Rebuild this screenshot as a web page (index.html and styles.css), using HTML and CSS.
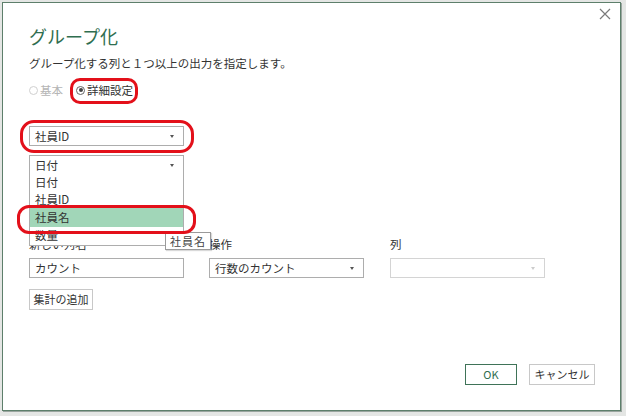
FILE: index.html
```html
<!DOCTYPE html>
<html lang="ja">
<head>
<meta charset="utf-8">
<link rel="stylesheet" href="styles.css">
</head>
<body>
<div class="dialog">
  <div class="close">
    <svg width="12" height="12" viewBox="0 0 12 12"><path d="M1 1L11 11M11 1L1 11" stroke="#7a7a7a" stroke-width="1.2" fill="none"/></svg>
  </div>
  <h1 class="title">グループ化</h1>
  <p class="subtitle">グループ化する列と１つ以上の出力を指定します。</p>
  <div class="radios">
    <label class="radio disabled"><span class="dot"></span>基本</label>
    <label class="radio"><span class="dot checked"></span>詳細設定</label>
  </div>
  <div class="select first"><span>社員ID</span><span class="arrow"></span></div>
  <div class="select second"><span>日付</span><span class="arrow"></span></div>
  <div class="spacer"></div>
  <div class="grid labels">
    <div>新しい列名</div>
    <div>操作</div>
    <div>列</div>
  </div>
  <div class="grid fields">
    <div class="input">カウント</div>
    <div class="select"><span>行数のカウント</span><span class="arrow"></span></div>
    <div class="select disabled"><span></span><span class="arrow"></span></div>
  </div>
  <button class="btn add">集計の追加</button>
  <div class="footer">
    <button class="btn ok">OK</button>
    <button class="btn cancel">キャンセル</button>
  </div>

  <ul class="list">
    <li>日付</li>
    <li>社員ID</li>
    <li class="hl">社員名</li>
    <li>数量</li>
  </ul>
  <div class="tooltip">社員名</div>

  <div class="mark m1"></div>
  <div class="mark m2"></div>
  <div class="mark m3"></div>
</div>
</body>
</html>
```
FILE: styles.css
```css
* { box-sizing: border-box; }
html, body { margin: 0; padding: 0; }
body {
  width: 626px;
  height: 416px;
  background: #e4e6e4;
  font-family: "Noto Sans CJK JP", "Noto Sans", sans-serif;
  color: #333;
  padding: 2px 0 0 2px;
}
.dialog {
  position: relative;
  width: 619px;
  height: 409px;
  background: #fff;
  border: 1px solid #5d7f6b;
  box-shadow: 1px 1px 0 #9aa59f;
  padding: 21px 0 0 26px;
  display: flex;
  flex-direction: column;
  align-items: flex-start;
}
.close {
  position: absolute;
  right: 9px;
  top: 5px;
  width: 12px;
  height: 12px;
  line-height: 0;
}
.title {
  margin: 0;
  font-size: 18px;
  font-weight: normal;
  line-height: 24px;
  color: #2f6e50;
}
.subtitle {
  margin: 6px 0 0;
  font-size: 11.5px;
  line-height: 18px;
  color: #333;
}
.radios {
  margin-top: 9px;
  display: flex;
  gap: 13px;
  font-size: 11.5px;
  line-height: 18px;
}
.radio {
  display: flex;
  align-items: center;
  gap: 2px;
}
.radio.disabled { color: #b5b5b5; }
.dot {
  width: 9px;
  height: 9px;
  border: 1px solid #b0b0b0;
  border-radius: 50%;
  position: relative;
}
.radio.disabled .dot { border-color: #d0d0d0; }
.dot.checked { border-color: #666; }
.dot.checked::after {
  content: "";
  position: absolute;
  left: 1.5px;
  top: 1.5px;
  width: 4px;
  height: 4px;
  border-radius: 50%;
  background: #444;
}
.select, .input {
  width: 155px;
  height: 20px;
  border: 1px solid #adadad;
  background: #fff;
  font-size: 11.5px;
  line-height: 18px;
  padding: 0 6px 0 5px;
  display: flex;
  align-items: center;
  justify-content: space-between;
  color: #333;
}
.arrow {
  width: 0;
  height: 0;
  border-left: 2.5px solid transparent;
  border-right: 2.5px solid transparent;
  border-top: 3px solid #555;
  margin-right: 3px;
}
.select.disabled { border-color: #d4d4d4; }
.select.disabled .arrow { border-top-color: #ccc; }
.select.first { margin-top: 27px; }
.select.second { margin-top: 9px; }
.spacer { height: 61px; }
.grid {
  display: grid;
  grid-template-columns: 155px 155px 155px;
  column-gap: 25px;
  font-size: 11.5px;
}
.labels { line-height: 16px; }
.labels div:nth-child(3) { padding-left: 1px; }
.fields { margin-top: 6px; }
.fields .select:nth-child(3) { margin-left: 1px; }
.btn {
  font-family: inherit;
  font-size: 11px;
  line-height: 17px;
  height: 21px;
  background: #fff;
  border: 1px solid #c8c8c8;
  color: #333;
  padding: 0;
  border-radius: 0;
  white-space: nowrap;
}
.add {
  margin-top: 11px;
  width: 64px;
}
.footer {
  margin-top: 54px;
  align-self: flex-end;
  margin-right: 25px;
  display: flex;
  gap: 12px;
}
.ok {
  width: 52px;
  border: 1px solid #3f7358;
  color: #2f6e50;
}
.cancel { width: 66px; }
.list {
  position: absolute;
  left: 26px;
  top: 170px;
  width: 155px;
  margin: 0;
  padding: 1px 0;
  list-style: none;
  background: #fff;
  border: 1px solid #adadad;
  border-top: none;
  font-size: 11.5px;
}
.list li {
  height: 17px;
  line-height: 17px;
  padding-left: 5px;
}
.list li.hl {
  background: #a1d6b8;
  height: 19px;
  line-height: 19px;
}
.tooltip {
  position: absolute;
  left: 162px;
  top: 229px;
  height: 18px;
  padding: 0 4px;
  background: #fff;
  border: 1px solid #9a9a9a;
  font-size: 11px;
  line-height: 16px;
  letter-spacing: 1px;
  color: #444;
  box-shadow: 1px 1px 1px rgba(0,0,0,0.15);
}
.mark {
  position: absolute;
  border: 3px solid #e3101a;
}
.m1 { left: 67px; top: 75px; width: 68px; height: 26px; border-radius: 10px; }
.m2 { left: 17px; top: 117px; width: 174px; height: 33px; border-radius: 14px; }
.m3 { left: 14px; top: 202px; width: 179px; height: 29px; border-radius: 12px; }
```
